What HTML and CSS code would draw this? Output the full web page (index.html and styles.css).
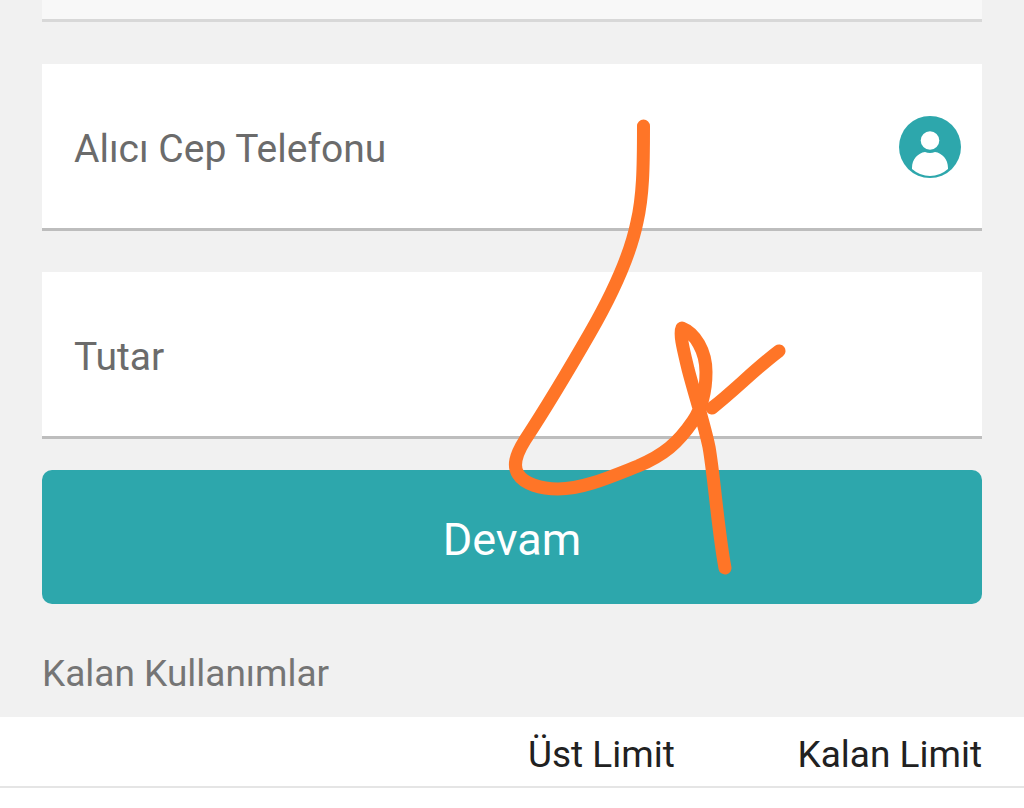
FILE: index.html
```html
<!DOCTYPE html>
<html lang="tr">
<head>
    <meta charset="UTF-8">
    <meta name="viewport" content="width=device-width, initial-scale=1.0">
    <title>Devam</title>
    <link rel="stylesheet" href="styles.css">
</head>
<body>
    <main class="page">
        <form class="transfer-form">
            <div class="field field-previous"></div>
            <div class="field">
                <input type="tel" id="phone" placeholder="Alıcı Cep Telefonu" aria-label="Alıcı Cep Telefonu">
                <button type="button" class="contact-button" aria-label="Alıcı">
                    <svg viewBox="0 0 64 64" aria-hidden="true">
                        <circle cx="32" cy="32" r="31" fill="#2da7ac"/>
                        <path d="M14 54V53C14 44 20 38 27 37Q32 39 37 37C44 38 50 44 50 53V54Q42 61 32 61T14 54Z" fill="#fff"/>
                        <circle cx="32" cy="25.5" r="9.3" fill="#fff"/>
                    </svg>
                </button>
            </div>
            <div class="field">
                <input type="text" id="amount" inputmode="decimal" placeholder="Tutar" aria-label="Tutar">
            </div>
            <button type="submit" class="submit-button">Devam</button>
        </form>

        <section class="usage">
            <h2>Kalan Kullanımlar</h2>
            <table>
                <thead>
                    <tr>
                        <td></td>
                        <th scope="col">Üst Limit</th>
                        <th scope="col">Kalan Limit</th>
                    </tr>
                </thead>
            </table>
        </section>

        <!-- Hand-drawn step number -->
        <svg class="step-mark" viewBox="500 110 300 470" aria-hidden="true">
            <path d="M643.5 126C643.5 168 643 196 637 222C629 261 609 300 590 333C567 373 544 411 525 440C515 456 513 466 518 474C524 484 541 489 558 489C583 489 610 477 638 466C664 455 678 443 693 421C703 406 706 391 706 372C706 351 695 333 682 328C679 334 684 352 688 369C695 396 704 423 709 447C714 475 718 531 725 568"/>
            <path d="M712 408C734 391 755 369 779 351"/>
        </svg>
    </main>
</body>
</html>
```

FILE: styles.css
```css
* {
    box-sizing: border-box;
}

body {
    margin: 0;
    background-color: #fff;
    font-family: Roboto, sans-serif;
    font-size: 37px;
    color: #212121;
}

.page {
    position: relative;
    background-color: #f1f1f1;
}

/* Form */
.transfer-form {
    display: flex;
    flex-direction: column;
    padding: 0 42px;
}

.field {
    display: flex;
    align-items: center;
    background-color: #fff;
    border-bottom: 3px solid #bdbdbd;
    padding: 0 20px 0 32px;
    margin-bottom: 41px;
}

.field-previous {
    height: 22px;
    background-color: #f8f8f8;
    border-color: #d8d8d8;
    margin-bottom: 42px;
}

.field input {
    flex: 1;
    min-width: 0;
    height: 164px;
    padding: 6px 0 0;
    border: none;
    outline: none;
    background: none;
    font: inherit;
    font-size: 39px;
    color: inherit;
}

.field input::placeholder {
    color: #6b6b6b;
    opacity: 1;
}

.contact-button {
    width: 64px;
    height: 66px;
    padding: 2px 0 0;
    border: none;
    background: none;
    cursor: pointer;
}

.contact-button svg {
    display: block;
}

.submit-button {
    height: 134px;
    margin-top: -10px;
    padding: 4px 0 0;
    border: none;
    border-radius: 10px;
    background-color: #2da7ac;
    color: #fff;
    font: inherit;
    font-size: 45px;
    cursor: pointer;
}

/* Remaining limits */
.usage h2 {
    margin: 0;
    padding: 45px 42px 18px;
    font-size: 37px;
    font-weight: 400;
    line-height: 50px;
    color: #757575;
}

.usage table {
    width: 100%;
    table-layout: fixed;
    border-collapse: collapse;
    background-color: #fff;
}

.usage tr {
    border-bottom: 2px solid #e5e5e5;
}

.usage td {
    width: 40%;
}

.usage th {
    padding: 13px 42px 6px 0;
    font-weight: 400;
    line-height: 50px;
    text-align: right;
    white-space: nowrap;
}

/* Drawing on top of the form */
.step-mark {
    position: absolute;
    top: 110px;
    left: 50%;
    width: 300px;
    height: 470px;
    margin-left: -12px;
    fill: none;
    stroke: #ff7527;
    stroke-width: 13;
    stroke-linecap: round;
    stroke-linejoin: round;
    pointer-events: none;
}
```
